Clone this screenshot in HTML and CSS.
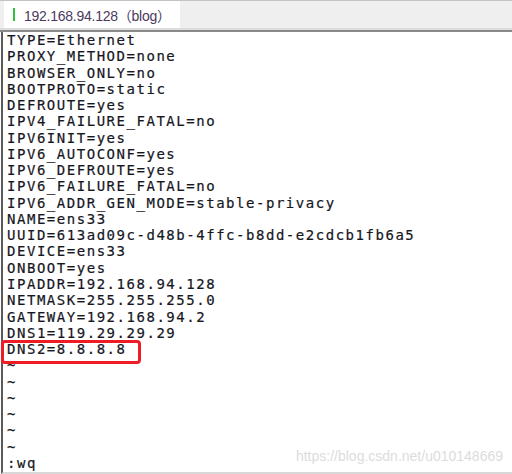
FILE: index.html
```html
<!DOCTYPE html>
<html>
<head>
<meta charset="utf-8">
<link rel="stylesheet" href="styles.css">
</head>
<body>
<div class="window">
  <div class="tabbar">
    <div class="tab"><span class="tab-mark"></span><span class="tab-title">192.168.94.128（blog）</span></div>
  </div>
  <div class="term">
    <div class="line">TYPE=Ethernet</div>
    <div class="line">PROXY_METHOD=none</div>
    <div class="line">BROWSER_ONLY=no</div>
    <div class="line">BOOTPROTO=static</div>
    <div class="line">DEFROUTE=yes</div>
    <div class="line">IPV4_FAILURE_FATAL=no</div>
    <div class="line">IPV6INIT=yes</div>
    <div class="line">IPV6_AUTOCONF=yes</div>
    <div class="line">IPV6_DEFROUTE=yes</div>
    <div class="line">IPV6_FAILURE_FATAL=no</div>
    <div class="line">IPV6_ADDR_GEN_MODE=stable-privacy</div>
    <div class="line">NAME=ens33</div>
    <div class="line">UUID=613ad09c-d48b-4ffc-b8dd-e2cdcb1fb6a5</div>
    <div class="line">DEVICE=ens33</div>
    <div class="line">ONBOOT=yes</div>
    <div class="line">IPADDR=192.168.94.128</div>
    <div class="line">NETMASK=255.255.255.0</div>
    <div class="line">GATEWAY=192.168.94.2</div>
    <div class="line">DNS1=119.29.29.29</div>
    <div class="line highlighted">DNS2=8.8.8.8<span class="mark-box"></span></div>
    <div class="line">~</div>
    <div class="line">~</div>
    <div class="line">~</div>
    <div class="line">~</div>
    <div class="line">~</div>
    <div class="line">~</div>
    <div class="line">:wq</div>
    <div class="watermark">https://blog.csdn.net/u010148669</div>
  </div>
</div>
</body>
</html>
```
FILE: styles.css
```css
html, body {
  margin: 0;
  padding: 0;
  background: #ffffff;
}
.window {
  width: 512px;
  height: 474px;
  overflow: hidden;
  display: flex;
  flex-direction: column;
}
.tabbar {
  flex: 0 0 auto;
  height: 27px;
  background: #efefef;
  border-top: 1px solid #c4c4c4;
  border-bottom: 2px solid #dcdcdc;
  box-shadow: 0 2px 0 #8a8a8a;
  padding-left: 4px;
  display: flex;
  align-items: flex-end;
  margin-bottom: 2px;
}
.tab {
  width: 176px;
  height: 27px;
  background: #ffffff;
  display: flex;
  align-items: center;
  white-space: nowrap;
}
.tab-mark {
  flex: 0 0 auto;
  width: 2px;
  height: 13px;
  background: #2fc23a;
  margin-left: 9px;
  margin-right: 9px;
}
.tab-title {
  font-family: "Liberation Sans", "Noto Sans CJK SC", Arial, sans-serif;
  font-size: 14px;
  color: #4a3a5c;
  white-space: nowrap;
  letter-spacing: -0.25px;
}
.term {
  flex: 1;
  position: relative;
  border-left: 2px solid #5a5a5a;
  border-bottom: 2px solid #d8d8d8;
  margin-left: 1px;
  padding-left: 4px;
  font-family: "DejaVu Sans Mono", monospace;
  font-size: 14px;
  letter-spacing: 1.53px;
  line-height: 16.27px;
  color: #16161e;
  -webkit-text-stroke: 0.2px #16161e;
}
.line {
  white-space: pre;
  height: 16.27px;
}
.highlighted {
  position: relative;
}
.mark-box {
  position: absolute;
  left: -6px;
  top: -1px;
  width: 134px;
  height: 18px;
  border: 3px solid #ee1c24;
  border-radius: 4px;
}
.watermark {
  position: absolute;
  right: 9px;
  bottom: 8px;
  font-family: "Liberation Sans", Arial, sans-serif;
  font-size: 14px;
  letter-spacing: 0;
  color: #dcdcdc;
  -webkit-text-stroke: 0;
}
```
